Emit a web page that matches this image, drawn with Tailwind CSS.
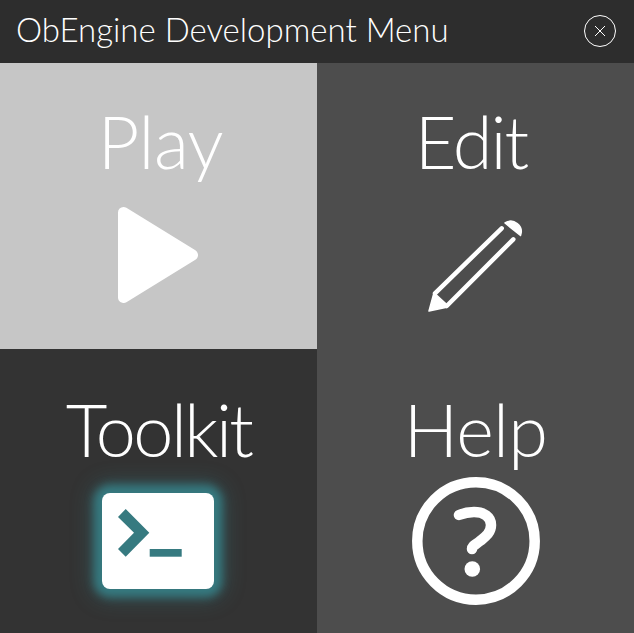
<!DOCTYPE html>
<html lang="en">
<head>
    <meta charset="UTF-8">
    <title>ObEngine Development Menu</title>
    <script src="https://cdn.jsdelivr.net/npm/@tailwindcss/browser@4"></script>
</head>
<body class="bg-[#4d4d4d] font-['Lato',sans-serif] font-light text-white overflow-hidden">
    <div class="w-[634px] h-[633px] flex flex-col">
        <!-- Title bar -->
        <header class="h-[63px] bg-[#2d2d2d] flex items-center justify-between pl-4 pr-[18px]">
            <h1 class="text-[33px] leading-[55px] mb-1 font-light">ObEngine Development Menu</h1>
            <svg class="w-8 h-8 mb-px" viewBox="0 0 32 32" fill="none" stroke="#fff">
                <circle cx="16" cy="16" r="15.5" stroke-width="1"/>
                <path d="M11 11 21 21M21 11 11 21" stroke-width="1"/>
            </svg>
        </header>

        <main class="flex-1 grid grid-cols-2 grid-rows-[286px_284px]">
            <!-- Play -->
            <div class="bg-[#c6c6c6] flex flex-col items-center">
                <div class="text-[72px] leading-[72px] mt-[42px] ml-[4px] tracking-[-0.5px] font-light">Play</div>
                <svg class="w-20 h-24 mt-[30px] mr-[2px]" viewBox="0 0 80 96" fill="#fff" stroke="#fff" stroke-width="11" stroke-linejoin="round">
                    <polygon points="5.5,5.5 74.5,48 5.5,90.5"/>
                </svg>
            </div>
            <!-- Edit -->
            <div class="flex flex-col items-center">
                <div class="text-[72px] leading-[72px] mt-[42px] mr-[9px] tracking-[-1.9px] font-light">Edit</div>
                <svg class="w-[100px] h-[100px] mt-[38px] ml-[4px]" viewBox="0 0 100 100" fill="#fff" stroke="none">
                    <path d="M77 8A10.5 10.5 0 0 1 92.5 20.5Z" stroke="#fff" stroke-width="1.5" stroke-linejoin="round"/>
                    <path d="M73.7 13.3 7 78.3M85.3 24.3 18.7 91" stroke="#fff" stroke-width="4.5" stroke-linecap="round" fill="none"/>
                    <path d="M6 77.7 10.3 81.7 19.3 90 18.7 92.3 1 96Z" stroke="#fff" stroke-width="1.5" stroke-linejoin="round"/>
                </svg>
            </div>
            <!-- Toolkit -->
            <div class="bg-[#333333] flex flex-col items-center">
                <div class="text-[72px] leading-[72px] mt-[44px] tracking-[-2.6px] font-light">Toolkit</div>
                <div class="w-28 h-24 mt-[28px] mr-[2px] bg-white rounded-lg shadow-[0_0_8px_8px_#367a80,0_0_20px_11px_#367a8066]">
                    <svg class="w-28 h-24" viewBox="0 0 112 96" fill="#367a80">
                        <path d="M23.7 16 47.3 39.7 23.7 63.7 16 56 32 39.7 16 24Z"/>
                        <rect x="47.7" y="56" width="32" height="7.7"/>
                    </svg>
                </div>
            </div>
            <!-- Help -->
            <div class="flex flex-col items-center">
                <div class="text-[72px] leading-[72px] mt-[44px] tracking-[-0.75px] font-light">Help</div>
                <svg class="w-32 h-32 mt-[12px]" viewBox="0 0 128 128" fill="none" stroke="#fff">
                    <circle cx="64" cy="64" r="58.7" stroke-width="10.5"/>
                    <path d="M47 38C52 36 57 35 62 35 72 35 79 40 79 48 79 56 73 60 68 64 63 68 60 69 60 72" stroke-width="10.5" stroke-linecap="round"/>
                    <circle cx="60.3" cy="92" r="7.8" fill="#fff" stroke="none"/>
                </svg>
            </div>
        </main>
    </div>
</body>
</html>
